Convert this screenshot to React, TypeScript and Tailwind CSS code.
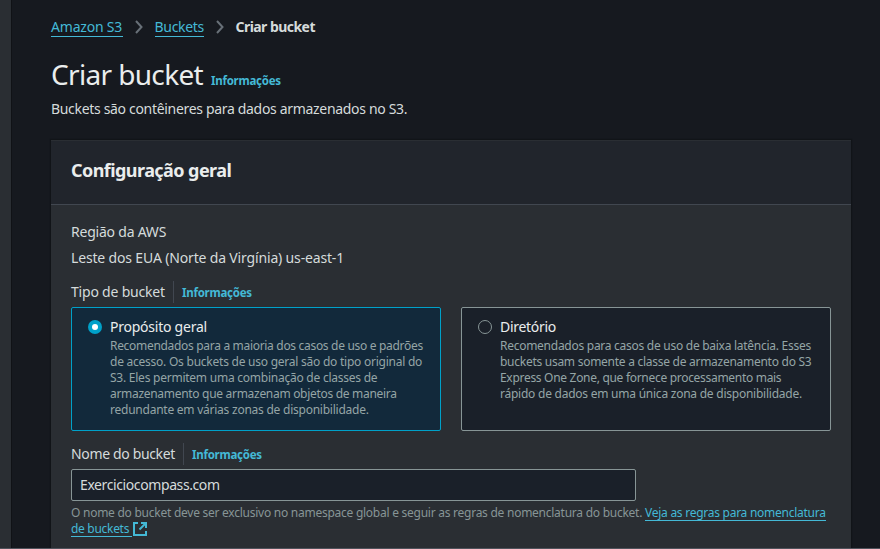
import type { ReactNode } from "react";

function Line({ className, children }: { className: string; children: ReactNode }) {
  return <span className={`block w-max whitespace-nowrap ${className}`}>{children}</span>;
}

function Info({ className = "" }: { className?: string }) {
  return (
    <a className={`whitespace-nowrap text-[11.5px] font-bold tracking-[-0.25px] text-[#44b9d6] ${className}`}>
      Informações
    </a>
  );
}

function Chevron() {
  return (
    <svg width="10" height="14" viewBox="0 0 10 14" fill="none" stroke="#687078" strokeWidth="2" className="shrink-0">
      <path d="M2 1l5.5 6L2 13" />
    </svg>
  );
}

function ExternalIcon() {
  return (
    <svg width="14" height="14" viewBox="0 0 14 14" fill="none" stroke="#44b9d6" strokeWidth="2" className="mt-px ml-px shrink-0">
      <path d="M5 1H1v12h12V9" />
      <path d="M8 1h5v5" />
      <path d="M13 1L6.5 7.5" />
    </svg>
  );
}

function FieldLabel({ children, className }: { children: string; className: string }) {
  return (
    <div className="flex h-[22px] items-center">
      <span className={`whitespace-nowrap leading-[22px] ${className}`}>{children}</span>
      <span className="h-[22px] w-px bg-[#414750]" />
      <Info className="ml-2 pt-[2px]" />
    </div>
  );
}

function Tile({ selected, title, children }: { selected?: boolean; title: ReactNode; children: ReactNode }) {
  return (
    <div
      className={`flex h-[124px] w-[370px] rounded-[2px] border pt-2 pl-4 ${
        selected ? "border-[#00a1c9] bg-[#12293b]" : "border-[#879596] bg-[#1a2029]"
      }`}
    >
      <span
        className={`mt-1 mr-2 flex h-[14px] w-[14px] shrink-0 items-center justify-center rounded-full ${
          selected ? "bg-[#00a1c9]" : "border border-[#879596]"
        }`}
      >
        {selected && <span className="h-[6px] w-[6px] rounded-full bg-white" />}
      </span>
      <div>
        <div className="leading-[22px] text-[#eaeded]">{title}</div>
        <div className="text-[12px] leading-4 text-[#95a5a6]">{children}</div>
      </div>
    </div>
  );
}

export default function App() {
  return (
    <div className="flex h-[549px] w-[880px] flex-col overflow-hidden bg-[#16191f] font-['Noto_Sans',sans-serif] text-[14px] text-[#d5dbdb]">
      <div className="flex h-[548px]">
        <div className="w-[12px] shrink-0 border-r border-[#101216] bg-[#2a2e33]" />
        <main className="w-[840px] pt-4 pl-[39px]">
          <nav className="flex h-[22px] items-center leading-[19px]">
            <a className="w-[72px] whitespace-nowrap border-b border-[#44b9d6] tracking-[-0.2px] text-[#44b9d6]">Amazon S3</a>
            <span className="flex w-[31.5px] justify-center"><Chevron /></span>
            <a className="w-[49px] whitespace-nowrap border-b border-[#44b9d6] tracking-[-0.3px] text-[#44b9d6]">Buckets</a>
            <span className="flex w-8 justify-center"><Chevron /></span>
            <span className="whitespace-nowrap pb-[2px] font-bold tracking-[-0.55px]">Criar bucket</span>
          </nav>

          <div className="mt-[18px] flex h-9 items-baseline">
            <h1 className="w-[160px] whitespace-nowrap text-[28px] leading-9 tracking-[-0.65px] text-[#eaeded]">Criar bucket</h1>
            <Info />
          </div>
          <p className="mt-[6px] leading-[22px]">
            <Line className="tracking-[-0.32px]">Buckets são contêineres para dados armazenados no S3.</Line>
          </p>

          <section className="mt-5 h-[408px] w-[800px] bg-[#2a2e33] shadow-[0_0_1px_1px_#111418]">
            <header className="flex h-[65px] items-center border-t border-b border-t-[#2a2e33] border-b-[#414750] bg-[#21252c] px-5 pb-[5px]">
              <h2 className="whitespace-nowrap text-[18px] font-bold leading-[22px] tracking-[-0.56px] text-[#eaeded]">Configuração geral</h2>
            </header>
            <div className="px-5 pt-4 leading-[22px]">
              <Line className="tracking-[-0.22px]">Região da AWS</Line>
              <Line className="mt-1 tracking-[-0.16px]">Leste dos EUA (Norte da Virgínia) us-east-1</Line>
              <div className="mt-3">
                <FieldLabel className="w-[102px] tracking-[-0.2px]">Tipo de bucket</FieldLabel>
              </div>
              <div className="mt-1 flex gap-5">
                <Tile selected title={<Line className="tracking-[-0.24px]">Propósito geral</Line>}>
                  <Line className="tracking-[-0.31px]">Recomendados para a maioria dos casos de uso e padrões</Line>
                  <Line className="tracking-[-0.24px]">de acesso. Os buckets de uso geral são do tipo original do</Line>
                  <Line className="tracking-[-0.24px]">S3. Eles permitem uma combinação de classes de</Line>
                  <Line className="tracking-[-0.3px]">armazenamento que armazenam objetos de maneira</Line>
                  <Line className="tracking-[-0.24px]">redundante em várias zonas de disponibilidade.</Line>
                </Tile>
                <Tile title={<Line className="tracking-[-0.3px]">Diretório</Line>}>
                  <Line className="tracking-[-0.27px]">Recomendados para casos de uso de baixa latência. Esses</Line>
                  <Line className="tracking-[-0.27px]">buckets usam somente a classe de armazenamento do S3</Line>
                  <Line className="tracking-[-0.3px]">Express One Zone, que fornece processamento mais</Line>
                  <Line className="tracking-[-0.24px]">rápido de dados em uma única zona de disponibilidade.</Line>
                </Tile>
              </div>
              <div className="mt-3">
                <FieldLabel className="w-[112px] tracking-[-0.35px]">Nome do bucket</FieldLabel>
              </div>
              <input
                className="mt-1 block h-8 w-[565px] rounded-[2px] border border-[#879596] bg-[#1a2029] px-2 pb-[2px] tracking-[-0.4px] text-[#d5dbdb] outline-none"
                defaultValue="Exerciciocompass.com"
              />
              <div className="mt-1 text-[12px] leading-4 text-[#879596]">
                <div className="flex h-4">
                  <span className="w-[574px] whitespace-nowrap tracking-[-0.255px]">
                    O nome do bucket deve ser exclusivo no namespace global e seguir as regras de nomenclatura do bucket.
                  </span>
                  <a className="h-4 w-[181px] whitespace-nowrap border-b border-[#44b9d6] tracking-[-0.26px] text-[#44b9d6]">Veja as regras para nomenclatura</a>
                </div>
                <div className="flex h-4">
                  <a className="h-4 w-[61px] whitespace-nowrap border-b border-[#44b9d6] tracking-[-0.3px] text-[#44b9d6]">de buckets</a>
                  <ExternalIcon />
                </div>
              </div>
            </div>
          </section>
        </main>
      </div>
      <div className="h-px bg-[#50535c]" />
    </div>
  );
}
